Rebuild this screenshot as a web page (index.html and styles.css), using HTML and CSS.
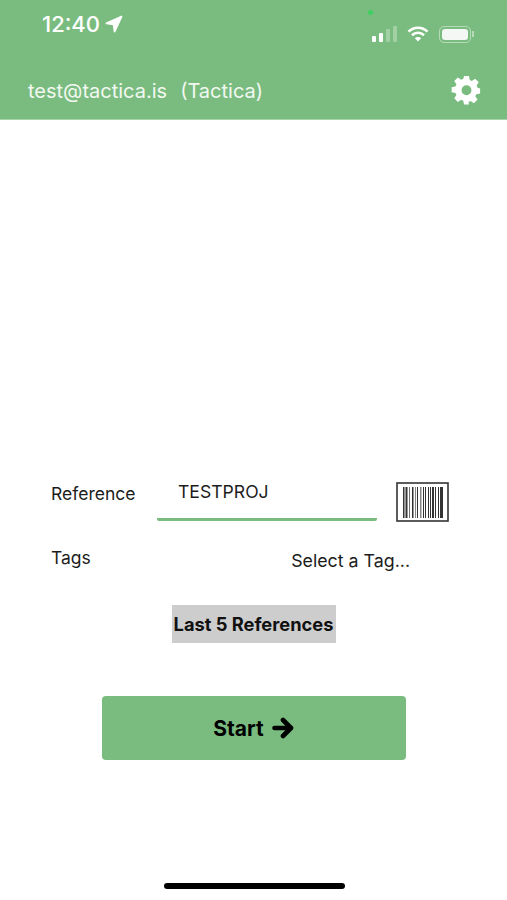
FILE: index.html
```html
<!DOCTYPE html>
<html lang="en">
<head>
    <meta charset="UTF-8">
    <meta name="viewport" content="width=device-width, initial-scale=1.0">
    <title>Start</title>
    <link rel="stylesheet" href="styles.css">
</head>
<body>

<header class="app-header">
    <span class="camera-dot"></span>
    <div class="status-bar">
        <div class="status-left">
            <span class="clock">12:40</span>
            <svg class="location-icon" width="18" height="18" viewBox="0 0 18 18"><path d="M16.500 1.500 L1.500 8.400 L8.600 9.400 L9.600 16.500 Z" fill="#fff" stroke="#fff" stroke-width="1.800" stroke-linejoin="round"/></svg>
        </div>
        <div class="status-right">
            <svg class="signal-icon" width="26" height="18" viewBox="0 0 26 18">
                <rect x="1" y="11" width="4" height="6" rx="1" fill="#fff"/>
                <rect x="8" y="8" width="4" height="9" rx="1" fill="#fff"/>
                <rect x="15" y="4" width="4" height="13" rx="1" fill="#fff" opacity="0.3"/>
                <rect x="22" y="1" width="4" height="16" rx="1" fill="#fff" opacity="0.3"/>
            </svg>
            <svg class="wifi-icon" width="22" height="16" viewBox="0 0 22 16">
                <path d="M1.5 5.6 A13.5 13.5 0 0 1 20.5 5.6" fill="none" stroke="#fff" stroke-width="2.6"/>
                <path d="M5 9.2 A8.6 8.6 0 0 1 17 9.2" fill="none" stroke="#fff" stroke-width="2.6"/>
                <path d="M11 15.6 L7.8 12.2 A4.6 4.6 0 0 1 14.2 12.2 Z" fill="#fff"/>
            </svg>
            <div class="battery">
                <div class="battery-fill"></div>
            </div>
            <span class="battery-cap"></span>
        </div>
    </div>
    <div class="account-bar">
        <div class="account">
            <span>test@tactica.is</span>
            <span>(Tactica)</span>
        </div>
        <svg class="gear-icon" width="33" height="33" viewBox="0 0 24 24"><path fill="#fff" fill-rule="evenodd" d="M10 1h4l.6 3.1c.6.2 1.2.5 1.7.8l2.7-1.8 2.9 2.9-1.8 2.7c.3.5.6 1.1.8 1.7L23 11v4l-3.1.6c-.2.6-.5 1.2-.8 1.7l1.8 2.7-2.9 2.9-2.7-1.8c-.5.3-1.1.6-1.700.8L14 24h-4l-.6-3.1c-.6-.2-1.2-.5-1.7-.8L5 21.900 2.100 19l1.800-2.700c-.3-.5-.6-1.100-.8-1.700L0 14v-4l3.100-.6c.2-.6.5-1.200.8-1.700L2.100 5 5 2.100l2.700 1.800c.5-.3 1.100-.6 1.700-.8z M12 8.500a4 4 0 1 0 0 8 4 4 0 0 0 0-8z" transform="translate(1.2 .6) scale(.9)"/></svg>
    </div>
</header>

<main class="content">
    <div class="form-row reference-row">
        <label class="field-label">Reference</label>
        <div class="reference-input">TESTPROJ</div>
        <svg class="barcode-icon" width="53" height="40" viewBox="0 0 53 40">
            <rect x="1" y="1" width="51" height="38" fill="#fff" stroke="#333" stroke-width="1.600"/>
            <g fill="#333">
                <rect x="7" y="5" width="1.500" height="31"/>
                <rect x="9.500" y="5" width="2" height="31"/>
                <rect x="13" y="5" width="1" height="31" opacity="0.7"/>
                <rect x="16" y="5" width="1.500" height="31"/>
                <rect x="19" y="5" width="1" height="31" opacity="0.6"/>
                <rect x="21" y="5" width="1" height="31"/>
                <rect x="24" y="5" width="1.500" height="31" opacity="0.6"/>
                <rect x="27" y="5" width="1" height="31"/>
                <rect x="29" y="5" width="1" height="31"/>
                <rect x="32" y="5" width="1" height="31"/>
                <rect x="34" y="5" width="1" height="31"/>
                <rect x="36" y="5" width="2" height="31"/>
                <rect x="39" y="5" width="1" height="31"/>
                <rect x="42" y="5" width="1" height="31"/>
                <rect x="44" y="5" width="3" height="31"/>
            </g>
        </svg>
    </div>

    <div class="form-row tags-row">
        <label class="field-label">Tags</label>
        <div class="tag-select">Select a Tag...</div>
    </div>

    <button class="last-refs">Last 5 References</button>

    <button class="start-button">
        Start
        <svg width="22" height="22" viewBox="0 0 22 22"><path d="M2.500 11 H18 M11 3 L19 11 L11 19" fill="none" stroke="#000" stroke-width="4.600" stroke-linecap="round" stroke-linejoin="round"/></svg>
    </button>
</main>

<div class="home-indicator"></div>

</body>
</html>
```

FILE: styles.css
```css
* {
    margin: 0;
    padding: 0;
    box-sizing: border-box;
    font-family: Inter, "Liberation Sans", sans-serif;
}

body {
    display: flex;
    flex-direction: column;
    height: 900px;
    background-color: #fff;
    color: #1c1c1c;
    overflow: hidden;
}

.app-header {
    position: relative;
    height: 120px;
    background-color: #7abc7f;
    color: #fff;
    border-bottom: 1px solid #a9d3ac;
}

.camera-dot {
    position: absolute;
    left: 368px;
    top: 10px;
    width: 5px;
    height: 5px;
    border-radius: 50%;
    background-color: #3fd05f;
}

.status-bar {
    display: flex;
    justify-content: space-between;
    padding: 12px 33px 0 42px;
    height: 74px;
}

.status-left {
    display: flex;
    align-items: flex-start;
    gap: 5px;
}

.clock {
    font-size: 22px;
    line-height: 24px;
    font-weight: 500;
}

.location-icon {
    margin-top: 3px;
}

.status-right {
    display: flex;
    align-items: flex-start;
}

.signal-icon {
    margin-top: 13px;
    margin-right: 10px;
}

.wifi-icon {
    margin-top: 14px;
    margin-right: 10px;
}

.battery {
    margin-top: 14px;
    width: 32px;
    height: 17px;
    padding: 2px;
    border: 1px solid rgba(255, 255, 255, 0.45);
    border-radius: 5px;
}

.battery-fill {
    height: 100%;
    background-color: #f4f7f4;
    border-radius: 3px;
}

.battery-cap {
    margin-top: 19px;
    margin-left: 1px;
    width: 2px;
    height: 6px;
    background-color: rgba(255, 255, 255, 0.45);
}

.account-bar {
    display: flex;
    justify-content: space-between;
    align-items: center;
    padding: 0 24px 0 28px;
}

.account {
    display: flex;
    gap: 13px;
    font-size: 20px;
    line-height: 24px;
    color: #f1f8f1;
}

.content {
    display: flex;
    flex-direction: column;
    align-items: center;
    flex: 1;
    padding-top: 352px;
}

.form-row {
    display: flex;
    width: 100%;
    padding-left: 51px;
}

.field-label {
    font-size: 17.500px;
    line-height: 22px;
}

.reference-row {
    align-items: flex-start;
    height: 75px;
}

.reference-row .field-label {
    width: 106px;
    margin-top: 11px;
}

.reference-input {
    width: 220px;
    height: 49px;
    padding: 9px 0 0 21px;
    font-size: 17.600px;
    line-height: 22px;
    border-bottom: 3px solid #7abc7f;
    border-radius: 2px;
}

.barcode-icon {
    margin-left: 19px;
    margin-top: 10px;
}

.tags-row {
    justify-content: space-between;
    padding-right: 97px;
    height: 58px;
}

.tag-select {
    font-size: 17.800px;
    line-height: 22px;
    margin-top: 3px;
}

.last-refs {
    width: 164px;
    height: 38px;
    border: none;
    background-color: #cdcdcd;
    color: #111;
    font-size: 18.300px;
    font-weight: 700;
    white-space: nowrap;
}

.start-button {
    display: flex;
    justify-content: center;
    align-items: center;
    gap: 8px;
    width: 304px;
    height: 64px;
    margin-top: 53px;
    border: none;
    border-radius: 4px;
    background-color: #7abc7f;
    color: #000;
    font-size: 21px;
    font-weight: 700;
}

.home-indicator {
    position: absolute;
    left: 164px;
    top: 883px;
    width: 181px;
    height: 6px;
    border-radius: 3px;
    background-color: #000;
}
```
